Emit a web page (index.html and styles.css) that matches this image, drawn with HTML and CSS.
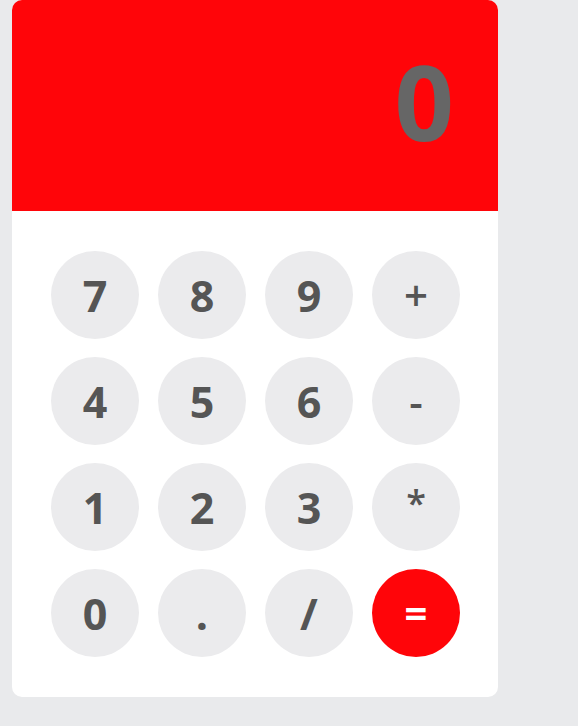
FILE: index.html
```html
<!DOCTYPE html>
<html>
<head>
<meta charset="utf-8">
<link rel="stylesheet" href="styles.css">
</head>
<body>
<div class="calc">
  <div class="display"><span class="value">0</span></div>
  <div class="keys">
    <button class="key">7</button>
    <button class="key">8</button>
    <button class="key">9</button>
    <button class="key op">+</button>
    <button class="key">4</button>
    <button class="key">5</button>
    <button class="key">6</button>
    <button class="key op">-</button>
    <button class="key">1</button>
    <button class="key">2</button>
    <button class="key">3</button>
    <button class="key op star">*</button>
    <button class="key">0</button>
    <button class="key">.</button>
    <button class="key">/</button>
    <button class="key equals">=</button>
  </div>
</div>
</body>
</html>
```

FILE: styles.css
```css
html, body {
  margin: 0;
  padding: 0;
  background: #e9eaec;
  font-family: "Open Sans", "Liberation Sans", sans-serif;
}
.calc {
  margin-left: 12px;
  width: 486px;
  height: 697px;
  background: #ffffff;
  border-radius: 10px;
  overflow: hidden;
}
.display {
  height: 211px;
  background: #ff0509;
  display: flex;
  align-items: center;
  justify-content: flex-end;
  padding-right: 44px;
  box-sizing: border-box;
}
.value {
  color: #666666;
  font-weight: 700;
  font-size: 104px;
  line-height: 1;
  margin-top: -10px;
}
.keys {
  display: grid;
  grid-template-columns: repeat(4, 88px);
  grid-auto-rows: 88px;
  column-gap: 19px;
  row-gap: 18px;
  padding: 40px 0 0 39px;
}
.key {
  width: 88px;
  height: 88px;
  border: none;
  border-radius: 50%;
  background: #ebebed;
  color: #555555;
  font-family: "Open Sans", "Liberation Sans", sans-serif;
  font-weight: 700;
  font-size: 43px;
  line-height: 1;
  padding: 0;
  display: flex;
  align-items: center;
  justify-content: center;
}
.key.op {
  font-size: 42px;
  font-weight: 600;
}
.key.star {
  font-size: 36px;
  padding-bottom: 8px;
}
.key.equals {
  background: #ff0509;
  color: #ffffff;
  font-size: 40px;
}
```
